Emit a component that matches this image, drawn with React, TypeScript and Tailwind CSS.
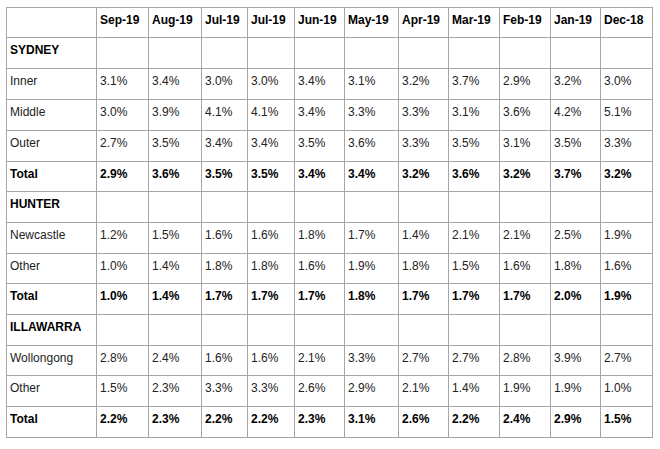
import React from 'react';

// ─── data ────────────────────────────────────────────────────────────────────

const MONTHS = ['Sep-19', 'Aug-19', 'Jul-19', 'Jul-19', 'Jun-19', 'May-19', 'Apr-19', 'Mar-19', 'Feb-19', 'Jan-19', 'Dec-18'];
const COL_W = [90, 52, 53, 46, 47, 50, 54, 50, 51, 51, 50, 52];

type Row = { label: string; kind: 'region' | 'item' | 'total'; values?: string[]; h: string };

const ROWS: Row[] = [
  { label: 'SYDNEY', kind: 'region', h: 'h-[31px]' },
  { label: 'Inner', kind: 'item', h: 'h-[31px]', values: ['3.1%', '3.4%', '3.0%', '3.0%', '3.4%', '3.1%', '3.2%', '3.7%', '2.9%', '3.2%', '3.0%'] },
  { label: 'Middle', kind: 'item', h: 'h-[31px]', values: ['3.0%', '3.9%', '4.1%', '4.1%', '3.4%', '3.3%', '3.3%', '3.1%', '3.6%', '4.2%', '5.1%'] },
  { label: 'Outer', kind: 'item', h: 'h-[31px]', values: ['2.7%', '3.5%', '3.4%', '3.4%', '3.5%', '3.6%', '3.3%', '3.5%', '3.1%', '3.5%', '3.3%'] },
  { label: 'Total', kind: 'total', h: 'h-[30px]', values: ['2.9%', '3.6%', '3.5%', '3.5%', '3.4%', '3.4%', '3.2%', '3.6%', '3.2%', '3.7%', '3.2%'] },
  { label: 'HUNTER', kind: 'region', h: 'h-[31px]' },
  { label: 'Newcastle', kind: 'item', h: 'h-[31px]', values: ['1.2%', '1.5%', '1.6%', '1.6%', '1.8%', '1.7%', '1.4%', '2.1%', '2.1%', '2.5%', '1.9%'] },
  { label: 'Other', kind: 'item', h: 'h-[30px]', values: ['1.0%', '1.4%', '1.8%', '1.8%', '1.6%', '1.9%', '1.8%', '1.5%', '1.6%', '1.8%', '1.6%'] },
  { label: 'Total', kind: 'total', h: 'h-[31px]', values: ['1.0%', '1.4%', '1.7%', '1.7%', '1.7%', '1.8%', '1.7%', '1.7%', '1.7%', '2.0%', '1.9%'] },
  { label: 'ILLAWARRA', kind: 'region', h: 'h-[31px]' },
  { label: 'Wollongong', kind: 'item', h: 'h-[30px]', values: ['2.8%', '2.4%', '1.6%', '1.6%', '2.1%', '3.3%', '2.7%', '2.7%', '2.8%', '3.9%', '2.7%'] },
  { label: 'Other', kind: 'item', h: 'h-[31px]', values: ['1.5%', '2.3%', '3.3%', '3.3%', '2.6%', '2.9%', '2.1%', '1.4%', '1.9%', '1.9%', '1.0%'] },
  { label: 'Total', kind: 'total', h: 'h-[31px]', values: ['2.2%', '2.3%', '2.2%', '2.2%', '2.3%', '3.1%', '2.6%', '2.2%', '2.4%', '2.9%', '1.5%'] },
];

const cell = 'border border-[#a6a6a6] align-top px-[3px] pt-[5px] text-left';

// ─── main ────────────────────────────────────────────────────────────────────

export default function App() {
  return (
    <div className="w-[660px] h-[449px] bg-white pl-[6px] pt-[7px] text-[12px] leading-[14px] text-[#222] font-['Liberation_Sans',Arial,sans-serif]">
      <table className="table-fixed border-collapse w-[647px]">
        <colgroup>
          {COL_W.map((w, i) => (
            <col key={i} style={{ width: w }} />
          ))}
        </colgroup>
        <thead>
          <tr className="h-[30px]">
            <th className={cell} />
            {MONTHS.map((m, i) => (
              <th key={i} className={`${cell} font-bold text-black`}>{m}</th>
            ))}
          </tr>
        </thead>
        <tbody>
          {ROWS.map((r, i) => (
            <tr key={i} className={r.h}>
              <td className={`${cell} ${r.kind === 'item' ? '' : 'font-bold text-black'}`}>{r.label}</td>
              {MONTHS.map((_, j) => (
                <td key={j} className={`${cell} ${r.kind === 'total' ? 'font-bold text-black' : ''}`}>
                  {r.values ? r.values[j] : ''}
                </td>
              ))}
            </tr>
          ))}
        </tbody>
      </table>
    </div>
  );
}
